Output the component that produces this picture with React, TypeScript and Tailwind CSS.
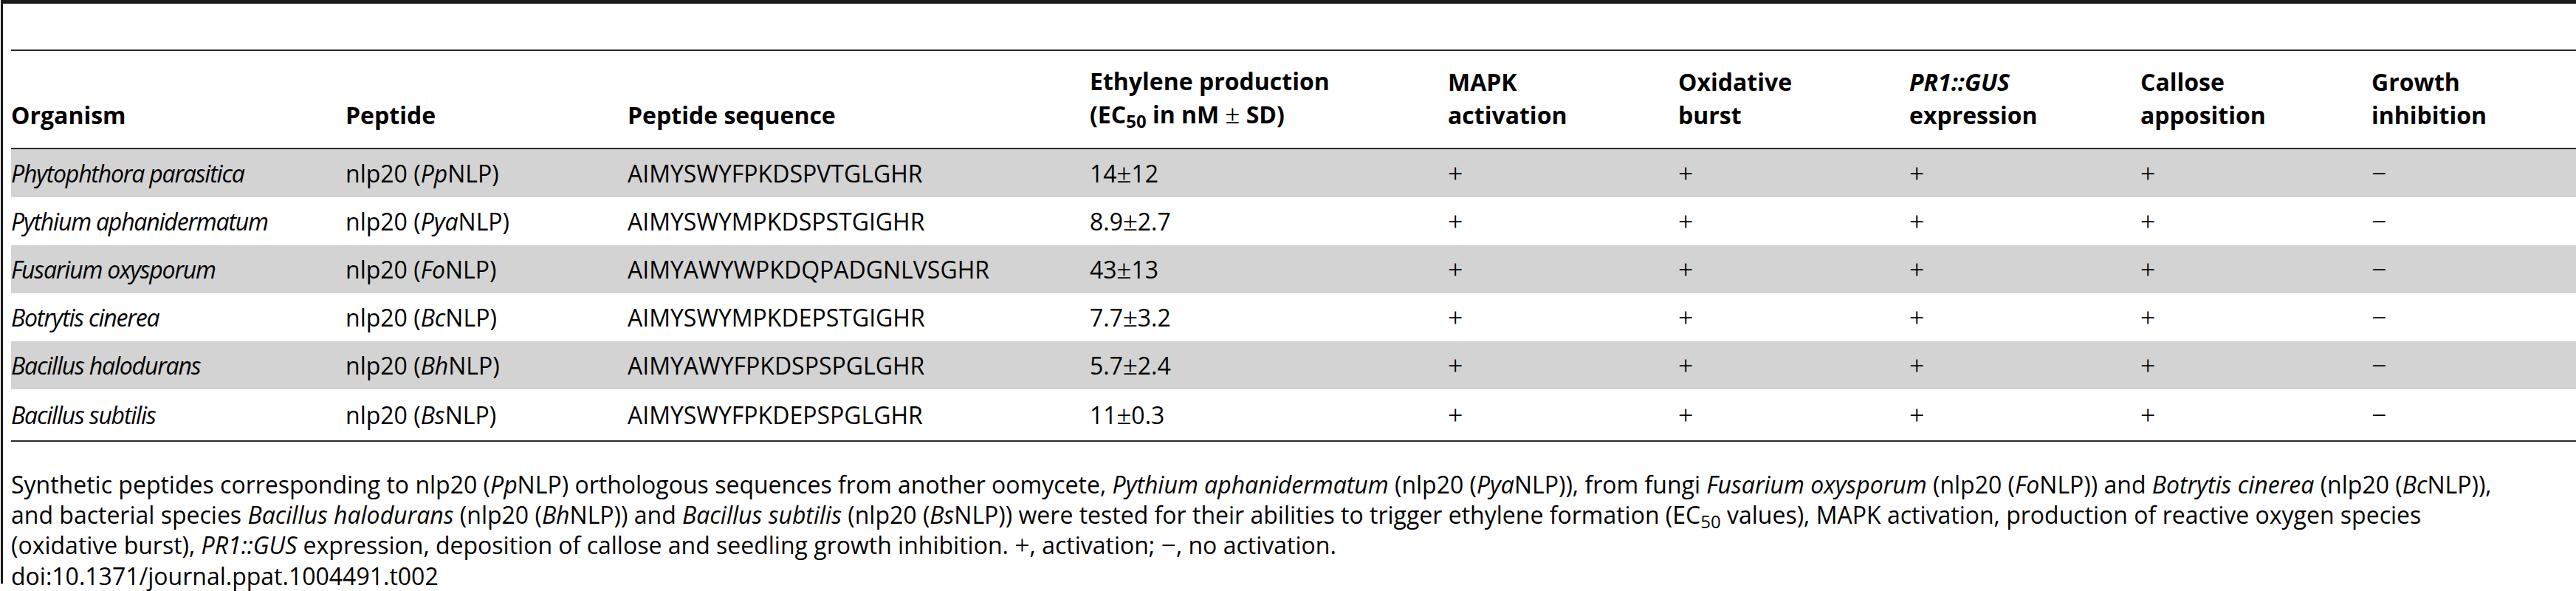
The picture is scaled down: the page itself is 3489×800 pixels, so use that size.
import React from "react";

type Row = {
  org: string;
  abbr: string;
  seq: string;
  a: string;
  b: string;
  gray: boolean;
};

const rows: Row[] = [
  { org: "Phytophthora parasitica", abbr: "Pp", seq: "AIMYSWYFPKDSPVTGLGHR", a: "14", b: "12", gray: true },
  { org: "Pythium aphanidermatum", abbr: "Pya", seq: "AIMYSWYMPKDSPSTGIGHR", a: "8.9", b: "2.7", gray: false },
  { org: "Fusarium oxysporum", abbr: "Fo", seq: "AIMYAWYWPKDQPADGNLVSGHR", a: "43", b: "13", gray: true },
  { org: "Botrytis cinerea", abbr: "Bc", seq: "AIMYSWYMPKDEPSTGIGHR", a: "7.7", b: "3.2", gray: false },
  { org: "Bacillus halodurans", abbr: "Bh", seq: "AIMYAWYFPKDSPSPGLGHR", a: "5.7", b: "2.4", gray: true },
  { org: "Bacillus subtilis", abbr: "Bs", seq: "AIMYSWYFPKDEPSPGLGHR", a: "11", b: "0.3", gray: false },
];

const cols = "grid grid-cols-[453px_382px_626px_485px_312px_313px_313px_313px_1fr]";

function Sym({ c }: { c: string }) {
  return <span className="font-['Liberation_Serif',serif] font-normal not-italic text-[36px]">{c}</span>;
}

export default function App() {
  return (
    <div className="w-[3489px] h-[800px] bg-white overflow-hidden text-black font-['Open_Sans',sans-serif]">
      <div className="ml-px h-[790px] border-t-[5px] border-l-[3px] border-[#1a1a1a] pl-[11px]">
        <div className="h-[62px]" />
        <div className="w-[3474px]">
          <div className="border-t-2 border-[#2b2b2b]" />
          <div className={`${cols} h-[131px] items-end pb-[22px] text-[32px] font-bold leading-[45px] whitespace-nowrap`}>
            <div>Organism</div>
            <div>Peptide</div>
            <div>Peptide sequence</div>
            <div>
              Ethylene production
              <br />
              (EC<sub>50</sub> in nM <Sym c={"\u00b1"} /> SD)
            </div>
            <div>
              MAPK
              <br />
              activation
            </div>
            <div>
              Oxidative
              <br />
              burst
            </div>
            <div>
              <i>PR1::GUS</i>
              <br />
              expression
            </div>
            <div>
              Callose
              <br />
              apposition
            </div>
            <div>
              Growth
              <br />
              inhibition
            </div>
          </div>
          <div className="border-t-2 border-[#2b2b2b]" />
          {rows.map((r, i) => (
            <div
              key={r.org}
              className={`${cols} items-center text-[32px] leading-[44px] whitespace-nowrap ${
                i === rows.length - 1 ? "h-[69px]" : "h-[65px]"
              } ${r.gray ? "bg-[#d3d3d3]" : "bg-white"}`}
            >
              <div>
                <i className="tracking-[-1.2px]">{r.org}</i>
              </div>
              <div>
                nlp20 (<i>{r.abbr}</i>NLP)
              </div>
              <div>{r.seq}</div>
              <div>
                {r.a}
                <Sym c={"\u00b1"} />
                {r.b}
              </div>
              <div>
                <Sym c="+" />
              </div>
              <div>
                <Sym c="+" />
              </div>
              <div>
                <Sym c="+" />
              </div>
              <div>
                <Sym c="+" />
              </div>
              <div>
                <Sym c={"\u2212"} />
              </div>
            </div>
          ))}
          <div className="border-t-2 border-[#2b2b2b]" />
        </div>
        <div className="mt-[37px] text-[32px] leading-[41px] whitespace-nowrap">
          <div>
            Synthetic peptides corresponding to nlp20 (<i>Pp</i>NLP) orthologous sequences from another oomycete,{" "}
            <i>Pythium aphanidermatum</i> (nlp20 (<i>Pya</i>NLP)), from fungi <i>Fusarium oxysporum</i> (nlp20 (
            <i>Fo</i>NLP)) and <i>Botrytis cinerea</i> (nlp20 (<i>Bc</i>NLP)),
          </div>
          <div>
            and bacterial species <i>Bacillus halodurans</i> (nlp20 (<i>Bh</i>NLP)) and <i>Bacillus subtilis</i> (nlp20 (
            <i>Bs</i>NLP)) were tested for their abilities to trigger ethylene formation (EC<sub>50</sub> values), MAPK
            activation, production of reactive oxygen species
          </div>
          <div>
            (oxidative burst), <i>PR1::GUS</i> expression, deposition of callose and seedling growth inhibition. <Sym c="+" />,
            activation; <Sym c={"\u2212"} />, no activation.
          </div>
          <div>doi:10.1371/journal.ppat.1004491.t002</div>
        </div>
      </div>
    </div>
  );
}
